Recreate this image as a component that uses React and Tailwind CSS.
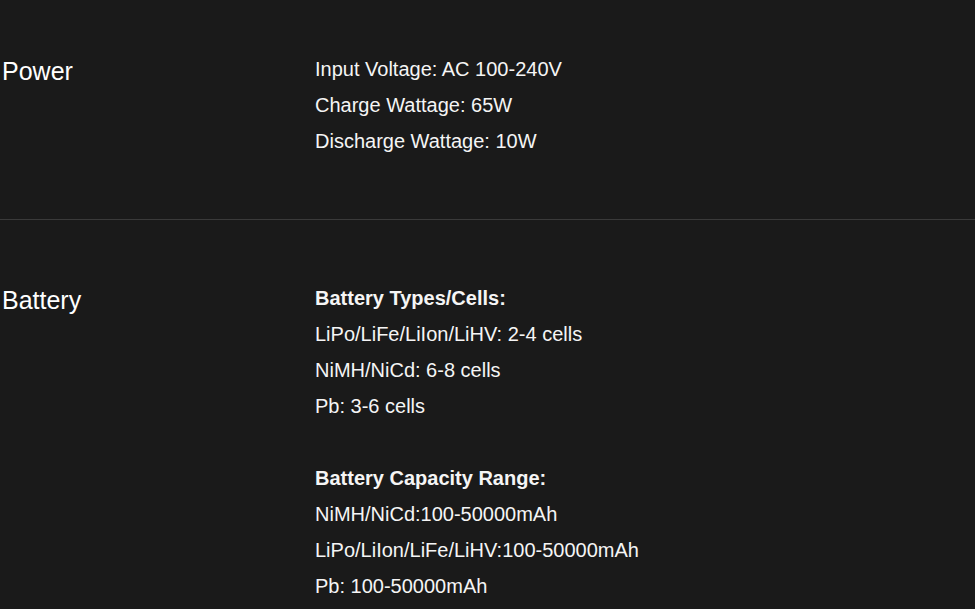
import React from 'react'

const specs = [
  {
    title: 'Power',
    lines: [
      'Input Voltage: AC 100-240V',
      'Charge Wattage: 65W',
      'Discharge Wattage: 10W',
    ],
  },
  {
    title: 'Battery',
    lines: [
      { bold: 'Battery Types/Cells:' },
      'LiPo/LiFe/LiIon/LiHV: 2-4 cells',
      'NiMH/NiCd: 6-8 cells',
      'Pb: 3-6 cells',
      '',
      { bold: 'Battery Capacity Range:' },
      'NiMH/NiCd:100-50000mAh',
      'LiPo/LiIon/LiFe/LiHV:100-50000mAh',
      'Pb: 100-50000mAh',
    ],
  },
]

const App = () => {
  return (
    <div
      className="min-h-[609px] bg-[#1a1a1a] text-white -mt-[9px]"
      style={{ fontFamily: '"Liberation Sans", Arial, sans-serif' }}
    >
      {specs.map((s, i) => (
        <div key={s.title}>
          {i > 0 && <div className="h-px bg-[#3a3a3a]" />}
          <div className="grid grid-cols-[313px_1fr] pl-[2px] py-[60px]">
            <h2 className="text-[25px] leading-[40px] font-normal">{s.title}</h2>
            <div className="text-[20px] leading-[36px] text-[#f5f5f5]">
              {s.lines.map((l, j) =>
                typeof l === 'string' ? (
                  <p key={j} className="h-[36px]">{l}</p>
                ) : (
                  <p key={j} className="font-bold">{l.bold}</p>
                )
              )}
            </div>
          </div>
        </div>
      ))}
    </div>
  )
}

export default App
